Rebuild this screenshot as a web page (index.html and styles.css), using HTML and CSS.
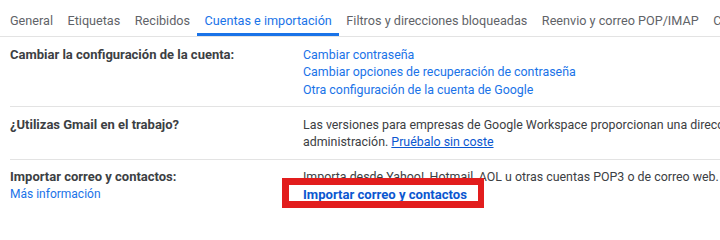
FILE: index.html
```html
<!DOCTYPE html>
<html lang="es">
<head>
<meta charset="utf-8">
<title>Configuración - Cuentas e importación</title>
<link rel="stylesheet" href="styles.css">
</head>
<body>
<nav class="tabs">
  <a class="tab">General</a>
  <a class="tab">Etiquetas</a>
  <a class="tab">Recibidos</a>
  <a class="tab active">Cuentas e importación</a>
  <a class="tab">Filtros y direcciones bloqueadas</a>
  <a class="tab">Reenvio y correo POP/IMAP</a>
  <a class="tab">Complementos</a>
</nav>
<main class="settings">
  <section class="row">
    <div class="label"><b>Cambiar la configuración de la cuenta:</b></div>
    <div class="value">
      <a class="link">Cambiar contraseña</a>
      <a class="link">Cambiar opciones de recuperación de contraseña</a>
      <a class="link">Otra configuración de la cuenta de Google</a>
    </div>
  </section>
  <section class="row">
    <div class="label"><b>¿Utilizas Gmail en el trabajo?</b></div>
    <div class="value nowrap">
      <span class="line">Las versiones para empresas de Google Workspace proporcionan una dirección de correo electrónico de empresa, más espacio y herramientas de</span>
      <span class="line">administración. <a class="ulink">Pruébalo sin coste</a></span>
    </div>
  </section>
  <section class="row">
    <div class="label">
      <b>Importar correo y contactos:</b>
      <a class="link small">Más información</a>
    </div>
    <div class="value nowrap">
      <span class="line">Importa desde Yahoo!, Hotmail, AOL u otras cuentas POP3 o de correo web.</span>
      <span class="line"><a class="link strong highlight">Importar correo y contactos<span class="marker"></span></a></span>
    </div>
  </section>
</main>
</body>
</html>
```

FILE: styles.css
```css
html, body {
  margin: 0;
  padding: 0;
  overflow: hidden;
  background: #ffffff;
}
body {
  font-family: Roboto, "Noto Sans", "Liberation Sans", sans-serif;
  font-size: 12.4px;
  color: #202124;
}
.tabs {
  display: flex;
  white-space: nowrap;
  overflow: hidden;
  padding-left: 2.75px;
  border-bottom: 1px solid #e3e3e3;
  height: 36px;
  box-sizing: content-box;
  font-size: 12.65px;
}
.tab {
  display: block;
  padding: 12px 7.25px 0;
  height: 36px;
  box-sizing: border-box;
  line-height: 18px;
  color: #5f6368;
  border-bottom: 3px solid transparent;
}
.tab.active {
  color: #1a73e8;
  border-bottom-color: #1a73e8;
  border-radius: 3px 3px 0 0;
}
.settings {
  padding-left: 10px;
}
.row {
  display: flex;
  padding: 8.5px 0 8px;
  border-bottom: 1px solid #e3e3e3;
  line-height: 17.5px;
}
.row:last-child {
  border-bottom: none;
}
.label {
  width: 293px;
  flex: none;
  display: flex;
  flex-direction: column;
}
.label b {
  font-weight: 700;
  font-size: 13px;
  color: #3c4043;
}
.value {
  display: flex;
  flex-direction: column;
  color: #3c4043;
  min-width: 0;
}
.nowrap {
  white-space: nowrap;
}
.line {
  display: block;
}
.link {
  color: #1a73e8;
  display: block;
}
.small {
  font-size: 12px;
}
.ulink {
  color: #0b57d0;
  text-decoration: underline;
}
.strong {
  font-weight: 700;
  font-size: 13.1px;
  color: #0b57d0;
}
.highlight {
  position: relative;
  display: inline-block;
}
.marker {
  position: absolute;
  left: -21px;
  top: -8px;
  width: 189px;
  height: 16px;
  border: 7px solid #e21d1d;
  border-right-width: 6px;
  pointer-events: none;
}
```
